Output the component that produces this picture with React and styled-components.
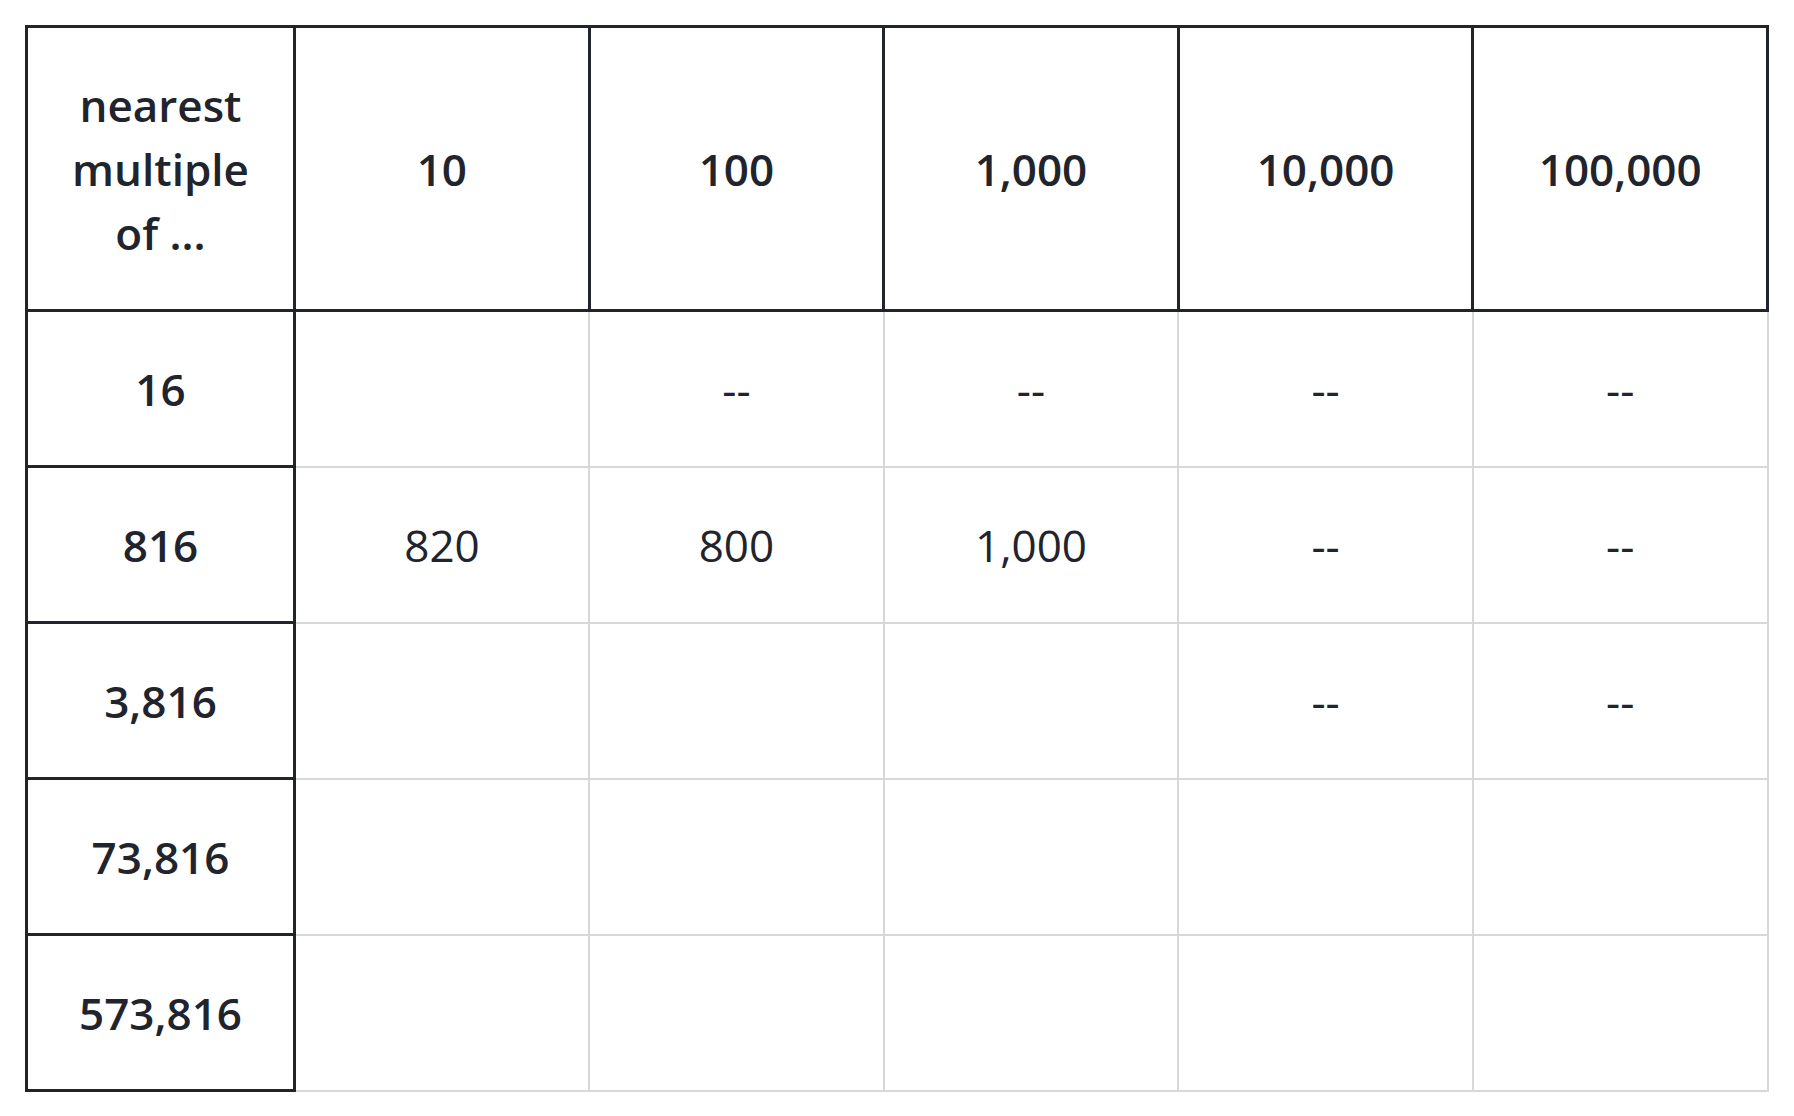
import React from "react";
import styled, { createGlobalStyle } from "styled-components";

const GlobalStyle = createGlobalStyle`
  html, body {
    margin: 0;
    padding: 0;
    background: #ffffff;
  }
  body {
    font-family: "Open Sans", "Noto Sans", "Liberation Sans", sans-serif;
    color: #21242c;
  }
`;

const Page = styled.div`
  padding: 25px 0 0 25px;
`;

const Table = styled.table`
  border-collapse: collapse;
  table-layout: fixed;
  width: 1744px;
  font-family: "Open Sans", "Noto Sans", "Liberation Sans", sans-serif;
  font-size: 44px;
  line-height: 64px;
  color: #21242c;
`;

const HeadRow = styled.tr`
  height: 284px;
`;

const BodyRow = styled.tr`
  height: 156px;
`;

const HeadCell = styled.th`
  border: 3px solid #21242c;
  font-weight: 600;
  text-align: center;
  vertical-align: middle;
  padding: 0 ${(p) => (p.$wide ? "34px" : "12px")};
`;

const RowHead = styled.th`
  border: 3px solid #21242c;
  font-weight: 600;
  text-align: center;
  vertical-align: middle;
  padding: 0 12px;
`;

const Cell = styled.td`
  border: 2px solid #d6d8da;
  font-weight: 400;
  text-align: center;
  vertical-align: middle;
  padding: 0 12px;
`;

const columns = ["10", "100", "1,000", "10,000", "100,000"];

const rows = [
  { label: "16", values: ["", "--", "--", "--", "--"] },
  { label: "816", values: ["820", "800", "1,000", "--", "--"] },
  { label: "3,816", values: ["", "", "", "--", "--"] },
  { label: "73,816", values: ["", "", "", "", ""] },
  { label: "573,816", values: ["", "", "", "", ""] },
];

export default function App() {
  return (
    <>
      <GlobalStyle />
      <Page>
        <Table>
          <colgroup>
            <col style={{ width: 268 }} />
            {columns.map((c) => (
              <col key={c} />
            ))}
          </colgroup>
          <thead>
            <HeadRow>
              <HeadCell $wide>nearest multiple of ...</HeadCell>
              {columns.map((c) => (
                <HeadCell key={c}>{c}</HeadCell>
              ))}
            </HeadRow>
          </thead>
          <tbody>
            {rows.map((r) => (
              <BodyRow key={r.label}>
                <RowHead scope="row">{r.label}</RowHead>
                {r.values.map((v, i) => (
                  <Cell key={i}>{v}</Cell>
                ))}
              </BodyRow>
            ))}
          </tbody>
        </Table>
      </Page>
    </>
  );
}
